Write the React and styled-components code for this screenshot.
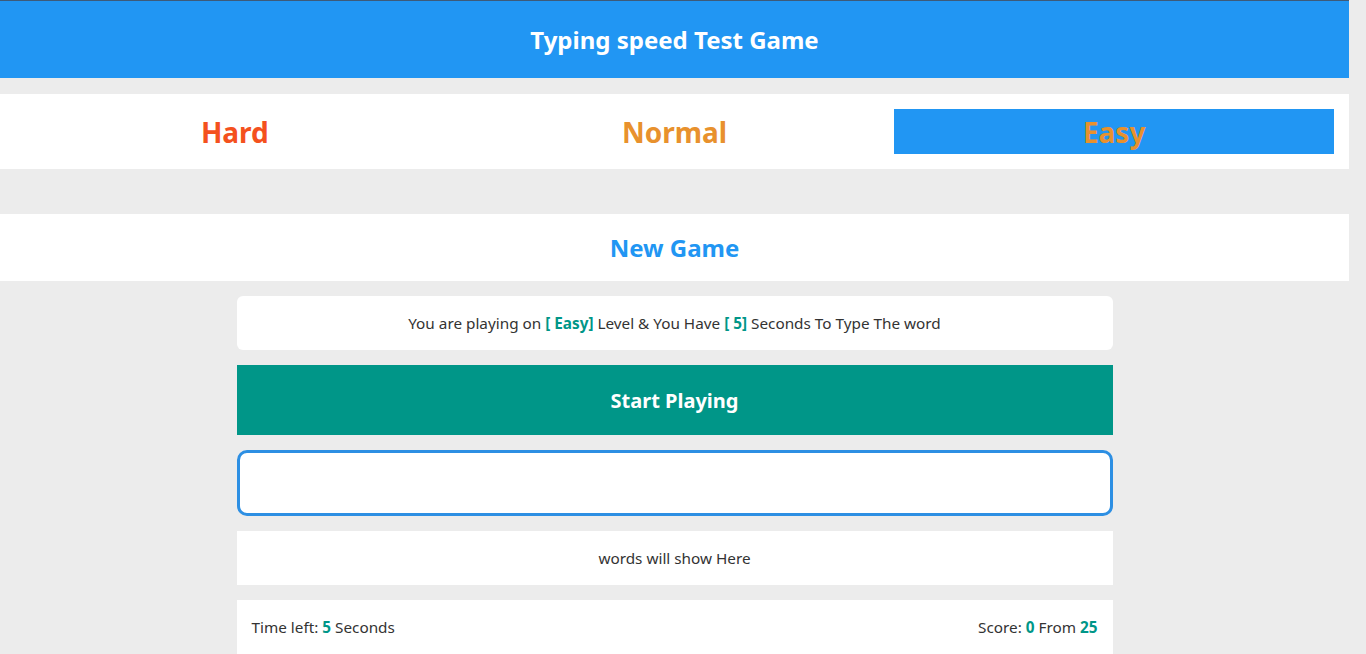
import React, { useState } from 'react';
import styled, { createGlobalStyle } from 'styled-components';

const levels = [
    { name: 'Hard', color: '#f4511e', seconds: 3 },
    { name: 'Normal', color: '#e8912d', seconds: 4 },
    { name: 'Easy', color: '#e8912d', seconds: 5 },
];

const App = () => {
    const [level, setLevel] = useState('Easy');
    const current = levels.find(l => l.name === level);

    return (
        <>
            <GlobalStyle />
            <Header>Typing speed Test Game</Header>

            <LevelBar>
                {levels.map(l => (
                    <LevelButton
                        key={l.name}
                        color={l.color}
                        active={l.name === level}
                        onClick={() => setLevel(l.name)}
                    >
                        {l.name}
                    </LevelButton>
                ))}
            </LevelBar>

            <NewGameBar>New Game</NewGameBar>

            <Game>
                <Message>
                    You are playing on <Hl>[ {current.name}]</Hl> Level &amp; You Have <Hl>[ {current.seconds}]</Hl> Seconds To Type The word
                </Message>
                <StartButton>Start Playing</StartButton>
                <WordInput type="text" />
                <Upcoming>words will show Here</Upcoming>
                <Control>
                    <span>Time left: <Hl>{current.seconds}</Hl> Seconds</span>
                    <span>Score: <Hl>0</Hl> From <Hl>25</Hl></span>
                </Control>
            </Game>
        </>
    );
};

export default App;

const GlobalStyle = createGlobalStyle`
    * {
        box-sizing: border-box;
    }
    html {
        background-color: #ececec;
    }
    body {
        margin: 0 17px 0 0;
        border-top: 1px solid #3d5a78;
        font-family: 'Noto Sans', 'Open Sans', sans-serif;
        color: #333;
    }
`;

const Header = styled.h1`
    margin: 0 0 16px;
    height: 77px;
    display: flex;
    align-items: center;
    justify-content: center;
    background-color: #2196f3;
    color: #fff;
    font-size: 24px;
    font-weight: 700;
`;

const LevelBar = styled.div`
    display: grid;
    grid-template-columns: repeat(3, 1fr);
    padding: 15px;
    background-color: #fff;
    margin-bottom: 45px;
`;

const LevelButton = styled.div`
    height: 45px;
    display: flex;
    align-items: center;
    justify-content: center;
    font-size: 28px;
    font-weight: 700;
    cursor: pointer;
    color: ${props => props.color};
    background-color: ${props => (props.active ? '#2196f3' : 'transparent')};
`;

const NewGameBar = styled.div`
    height: 67px;
    display: flex;
    align-items: center;
    justify-content: center;
    background-color: #fff;
    color: #2196f3;
    font-size: 24px;
    font-weight: 700;
    cursor: pointer;
    margin-bottom: 15px;
`;

const Game = styled.div`
    width: 876px;
    margin: 0 auto;
    display: flex;
    flex-direction: column;
    gap: 15px;
`;

const Message = styled.div`
    height: 54px;
    display: flex;
    align-items: center;
    justify-content: center;
    white-space: pre;
    background-color: #fff;
    border-radius: 6px;
    font-size: 15.3px;
`;

const Hl = styled.span`
    color: #009688;
    font-weight: 700;
`;

const StartButton = styled.div`
    height: 70px;
    display: flex;
    align-items: center;
    justify-content: center;
    background-color: #009688;
    color: #fff;
    font-size: 20px;
    font-weight: 700;
    cursor: pointer;
`;

const WordInput = styled.input`
    height: 66px;
    width: 100%;
    border: 3px solid #2d8fe3;
    border-radius: 10px;
    background-color: #fff;
    outline: none;
    font-size: 20px;
    text-align: center;
`;

const Upcoming = styled.div`
    height: 54px;
    display: flex;
    align-items: center;
    justify-content: center;
    background-color: #fff;
    font-size: 15.3px;
`;

const Control = styled.div`
    display: flex;
    justify-content: space-between;
    align-items: center;
    padding: 17px 15px;
    background-color: #fff;
    font-size: 15.3px;
`;
